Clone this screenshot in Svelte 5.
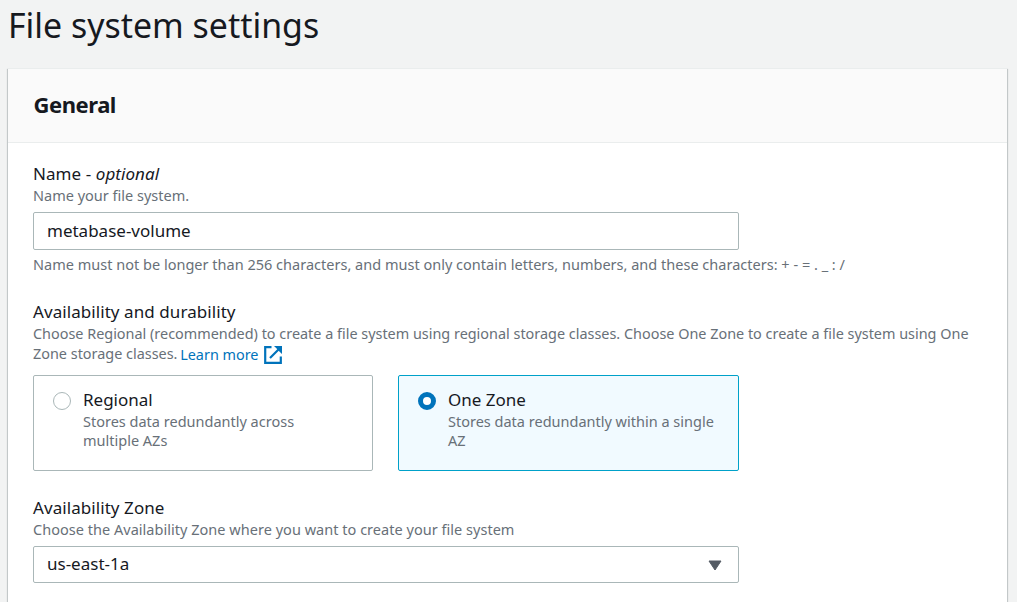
<script>
  let selected = $state('zone');
  let name = $state('metabase-volume');
  const options = [
    { id: 'regional', label: 'Regional', lines: ['Stores data redundantly across', 'multiple AZs'] },
    { id: 'zone', label: 'One Zone', lines: ['Stores data redundantly within a single', 'AZ'] }
  ];
</script>

<main>
  <h1>File system settings</h1>
  <section class="panel">
    <header><h2>General</h2></header>
    <div class="body">
      <div class="field name">
        <label class="label" for="fs-name">Name - <em>optional</em></label>
        <p class="hint">Name your file system.</p>
        <input id="fs-name" class="control" bind:value={name} />
        <p class="hint rule">Name must not be longer than 256 characters, and must only contain letters, numbers, and these characters: + - = . _ : /</p>
      </div>

      <div class="field availability">
        <div class="label">Availability and durability</div>
        <p class="hint choose">
          Choose Regional (recommended) to create a file system using regional storage classes. Choose One Zone to create a file system using One<br />
          Zone storage classes.
          <a href="#learn">Learn more<svg viewBox="0 0 18 18" width="18" height="18" fill="none" stroke="currentColor" stroke-width="2.2"><path d="M7.5 1.2H1.2v15.6h15.6v-6.3M15.5 2.5 6 12" /><path d="M10 0h8v8l-2.6-2.6-2.8-2.8z" fill="currentColor" stroke="none" /></svg></a>
        </p>
        <div class="tiles">
          {#each options as o}
            <button class="tile" class:selected={selected === o.id} onclick={() => (selected = o.id)}>
              <span class="radio"></span>
              <span class="text">
                <span class="label">{o.label}</span>
                {#each o.lines as line}<span class="hint">{line}</span>{/each}
              </span>
            </button>
          {/each}
        </div>
      </div>

      <div class="field">
        <div class="label">Availability Zone</div>
        <p class="hint zone-hint">Choose the Availability Zone where you want to create your file system</p>
        <div class="control select"><span>us-east-1a</span>
          <svg width="14" height="11" viewBox="0 0 14 11"><path d="M1 1h12L7 10z" fill="#545b64" stroke="#545b64" stroke-linejoin="round" /></svg>
        </div>
      </div>
    </div>
  </section>
</main>

<style>
  :global(body) { background: #f2f3f3; overflow: hidden; }
  * { box-sizing: border-box; }
  main { height: 602px; overflow: hidden; padding: 0 10px 0 8px; font-family: "Noto Sans", sans-serif; color: #16191f; }
  h1, h2, p { margin: 0; font-weight: 400; white-space: nowrap; }
  h1 { height: 68px; font-size: 33.9px; line-height: 50px; }
  .panel { height: 600px; background: #fff; border-top: 1px solid #eaeded; box-shadow: 0 1px 1px rgba(0, 28, 36, .3), 1px 1px 1px rgba(0, 28, 36, .15), -1px 1px 1px rgba(0, 28, 36, .15); }
  header { height: 74px; padding: 0 25.5px; background: #fafafa; border-bottom: 1px solid #eaeded; }
  h2 { font-size: 22px; line-height: 71px; font-weight: 700; letter-spacing: -.45px; }
  .body { padding: 20px 25px; }
  .label { display: block; font-size: 17px; line-height: 22px; letter-spacing: .07px; white-space: nowrap; }
  .hint { display: block; font-size: 14.5px; line-height: 20px; color: #687078; white-space: nowrap; }
  .control { display: block; width: 706px; height: 38px; margin-top: 7px; padding: 0 13px 2px; border: 1px solid #aab7b8; border-radius: 2px; background: #fff; font: 17px/34px "Noto Sans", sans-serif; color: #16191f; outline: none; }
  .name { height: 138px; }
  .rule { margin-top: 4px; letter-spacing: .01px; }
  .zone-hint { letter-spacing: .025px; }
  .availability { height: 196px; }
  a { position: relative; top: 1px; left: -1px; color: #0073bb; text-decoration: none; }
  a svg { margin-left: 5px; vertical-align: -4px; }
  .choose { height: 42px; padding-top: 1px; font-size: 14.42px; }
  .tiles { display: grid; grid-template-columns: 340px 341px; gap: 25px; margin-top: 10px; }
  .tile { display: flex; height: 96px; padding: 13px 19px; text-align: left; background: #fff; border: 1px solid #aab7b8; border-radius: 2px; font-family: inherit; color: inherit; }
  .tile.selected { background: #f1faff; border-color: #00a1c9; }
  .tile .label { letter-spacing: 0; }
  .tile .hint { line-height: 19px; }
  .tile .label + .hint { padding-top: 1px; }
  .radio { flex: none; width: 18px; height: 18px; margin: 3px 12px 0 0; border: 1.5px solid #aab7b8; border-radius: 50%; background: #fff; }
  .selected .radio { border: 5px solid #0073bb; }
  .select { display: flex; align-items: center; justify-content: space-between; height: 37px; padding-right: 16px; }
  .select svg { margin-top: 3px; }
</style>
